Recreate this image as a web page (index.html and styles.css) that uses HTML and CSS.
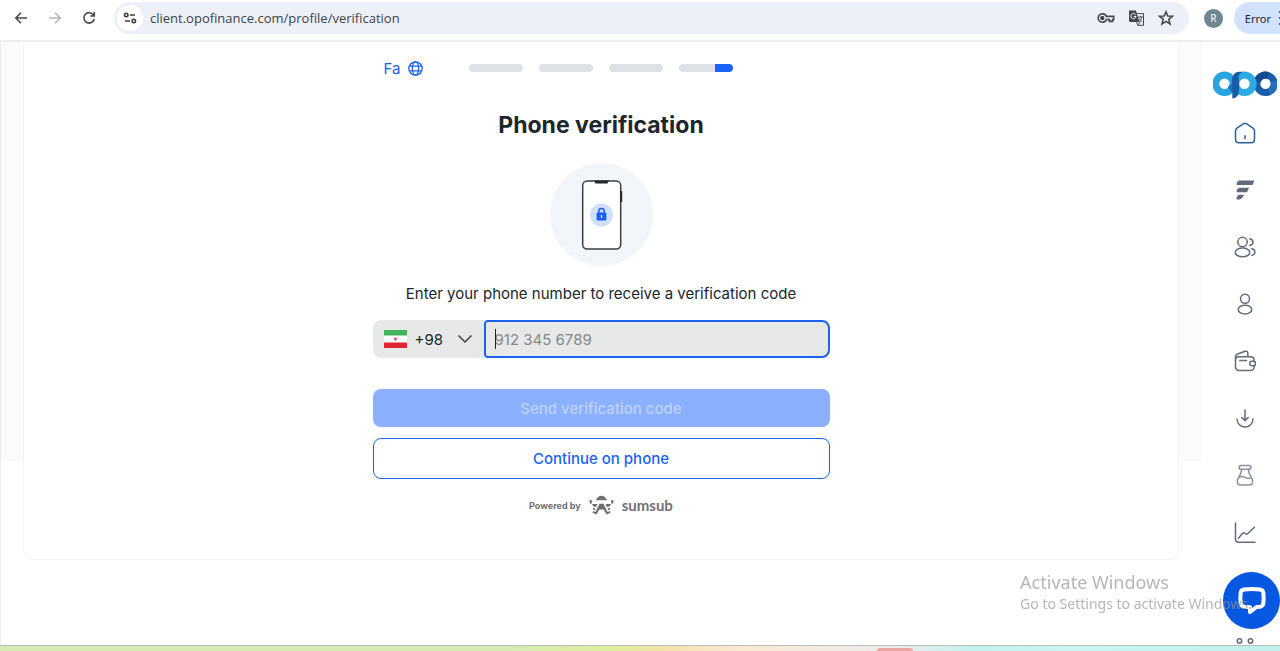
FILE: index.html
```html
<!DOCTYPE html>
<html lang="en">

<head>
    <meta charset="UTF-8">
    <meta name="viewport" content="width=device-width, initial-scale=1.0">
    <title>Phone verification</title>
    <link rel="stylesheet" href="styles.css">
</head>

<body>
    <header class="toolbar">
        <nav class="toolbar-nav">
            <button type="button" class="icon-button" aria-label="Back">
                <svg width="16" height="16" viewBox="0 0 16 16"><path d="M14 8H3M8 2.8L2.8 8L8 13.2" /></svg>
            </button>
            <button type="button" class="icon-button muted" aria-label="Forward">
                <svg width="16" height="16" viewBox="0 0 16 16"><path d="M2 8H13M8 2.8L13.2 8L8 13.2" /></svg>
            </button>
            <button type="button" class="icon-button" aria-label="Reload">
                <svg width="16" height="16" viewBox="0 0 16 16"><path d="M12.6 5.2A5.2 5.2 0 1 0 13.2 9M13.3 2V6H9.3" /></svg>
            </button>
        </nav>
        <div class="address-bar">
            <button type="button" class="site-info" aria-label="Site information">
                <svg width="14" height="14" viewBox="0 0 14 14"><circle cx="3.2" cy="4" r="1.7" /><path d="M7 4H12M2 10H7" /><circle cx="10.8" cy="10" r="1.7" /></svg>
            </button>
            <input type="text" class="address-input" value="client.opofinance.com/profile/verification" aria-label="Address">
            <div class="address-actions">
                <button type="button" class="icon-button" aria-label="Passwords">
                    <svg width="18" height="16" viewBox="0 0 18 16"><path d="M9.4 6.4H16.7V9.6H15.6V11.4H12.4V9.6H9.4A4.3 4.3 0 1 1 9.4 6.4Z" /><circle cx="5.3" cy="8" r="1.4" fill="currentColor" /></svg>
                </button>
                <button type="button" class="icon-button" aria-label="Translate">
                    <svg width="17" height="16" viewBox="0 0 17 16"><path class="solid" d="M1 0.5H8L11.5 12H2.5A1.5 1.5 0 0 1 1 10.5Z" /><path class="light" d="M7.6 4.7A2.6 2.6 0 1 0 8 6.4H5.7" /><path class="thin" d="M9.3 3.6H15.5V15.3H9.8L8.5 12.2M9.8 15L12.2 12M10.2 7H14.8M12.4 5.8V7M14 7C13.5 9.4 12 11 10.8 11.8M11.3 8.5C12 10.2 13 11.2 14.3 12" /></svg>
                </button>
                <button type="button" class="icon-button" aria-label="Bookmark">
                    <svg width="16" height="16" viewBox="0 0 16 16"><path d="M8 1.8L9.8 6L14.3 6.3L10.8 9.3L12 13.9L8 11.4L4 13.9L5.2 9.3L1.7 6.3L6.2 6Z" /></svg>
                </button>
            </div>
        </div>
        <button type="button" class="avatar">R</button>
        <button type="button" class="error-button">Error <span class="dots"></span></button>
    </header>

    <div class="page">
        <main class="content">
            <section class="card">
                <form class="verification">
                    <div class="top-row">
                        <button type="button" class="language">
                            Fa
                            <svg width="15" height="15" viewBox="0 0 15 15"><circle cx="7.5" cy="7.5" r="6.7" /><ellipse cx="7.5" cy="7.5" rx="3.1" ry="6.7" /><path d="M1.4 5.2H13.6M1.4 9.8H13.6" /></svg>
                        </button>
                        <div class="steps">
                            <span class="step"></span>
                            <span class="step"></span>
                            <span class="step"></span>
                            <span class="step current"></span>
                        </div>
                    </div>

                    <h1 class="title">Phone verification</h1>

                    <svg class="phone-picture" width="103" height="103" viewBox="0 0 103 103">
                        <circle cx="51.5" cy="51.5" r="51.5" fill="#f2f5fa" />
                        <rect x="32.7" y="18" width="38" height="68" rx="4.5" fill="#fff" stroke="#3b3d42" stroke-width="1.5" />
                        <path d="M44 17.5H59L57.5 20.5H45.5Z" fill="#25272c" />
                        <rect x="70.2" y="28" width="2" height="11" rx="0.6" fill="#25272c" />
                        <circle cx="51.5" cy="52" r="11.5" fill="#d0dffc" />
                        <path d="M48.8 50V48.3A2.7 2.7 0 0 1 54.2 48.3V50" fill="none" stroke="#1b5ff0" stroke-width="1.5" />
                        <rect x="46.6" y="49.5" width="9.8" height="8" rx="1" fill="#1b5ff0" />
                        <path d="M51.5 52V55" stroke="#cfdffc" stroke-width="1.4" />
                    </svg>

                    <label for="phone" class="hint">Enter your phone number to receive a verification code</label>

                    <div class="phone-row">
                        <div class="country">
                            <svg width="23" height="18" viewBox="0 0 23 18"><rect width="23" height="18" fill="#fff" /><rect width="23" height="5.5" fill="#41b35d" /><rect y="12.5" width="23" height="5.5" fill="#e0252f" /><path d="M9.8 7.6L11.5 10.4L13.2 7.6M11.5 7.6V10.4" fill="none" stroke="#e0454c" /></svg>
                            <select class="country-select" aria-label="Country code">
                                <option>+98</option>
                            </select>
                            <svg class="chevron" width="16" height="10" viewBox="0 0 16 10"><path d="M1.5 1.5L8 8L14.5 1.5" /></svg>
                        </div>
                        <div class="phone-field">
                            <input type="tel" id="phone" class="phone-input" placeholder="912 345 6789">
                            <span class="caret"></span>
                        </div>
                    </div>

                    <button type="submit" class="send-button" disabled>Send verification code</button>
                    <button type="button" class="continue-button">Continue on phone</button>

                    <div class="powered">
                        <span>Powered by</span>
                        <svg width="25" height="20" viewBox="0 0 25 20">
                            <path d="M6.5 5.2C8 4.6 8.6 0.8 12.5 0.8S17 4.6 18.5 5.2Z" />
                            <path d="M0.5 5L3.2 5.6L2.3 9L0.8 8.4ZM24.5 5L21.8 5.6L22.7 9L24.2 8.4Z" />
                            <path d="M3 9H8.5L7 12L4.5 11.6ZM22 9H16.5L18 12L20.5 11.6Z" />
                            <path d="M10.5 8.8H14.5L18.5 17L21 16L21.5 17.8L17.6 19.4L14.6 14.4H10.4L7.4 19.4L3.5 17.8L4 16L6.5 17Z" />
                            <path d="M4 12.8L6.6 13.6L5.6 15.2L4 14.6ZM21 12.8L18.4 13.6L19.4 15.2L21 14.6Z" />
                        </svg>
                        <span class="brand">sumsub</span>
                    </div>
                </form>
            </section>
        </main>

        <aside class="sidebar">
            <a href="#" class="logo" aria-label="Opo">
                <svg width="64" height="28" viewBox="0 0 64 28">
                    <g fill="none" stroke-width="7">
                        <circle cx="52.5" cy="12.8" r="8.7" stroke="#1c5da8" />
                        <path d="M44 10.8A8.7 8.7 0 0 1 55 4.5" stroke="#154a8e" />
                        <circle cx="11.5" cy="12.8" r="8.7" stroke="#27a5df" />
                        <circle cx="31.5" cy="12.8" r="8.7" stroke="#2aabe4" />
                        <path d="M17 19A8.7 8.7 0 0 0 20 14" stroke="#1c74bd" />
                        <path d="M56 20.8A8.7 8.7 0 0 0 61 10" stroke="#2170b8" />
                    </g>
                    <path d="M22 2C19 5 18.5 9 19.3 14V27.5C23.5 27 26 24 26 20V11C26 7 24 3 30 0.8C26 0.5 24 0.8 22 2Z" fill="#1a5ba6" />
                </svg>
            </a>
            <nav class="menu">
                <a href="#" class="home" aria-label="Home"><svg width="22" height="22" viewBox="0 0 22 22"><path d="M1.5 9C1.5 7.7 2 6.9 3 6.2L9.2 1.8C10.4 1 11.6 1 12.8 1.8L19 6.2C20 6.9 20.5 7.7 20.5 9V17C20.5 19.5 19 20.8 17 20.8H5C3 20.8 1.5 19.5 1.5 17ZM11 13.8V16.8" /></svg></a>
                <a href="#" aria-label="Platforms"><svg width="22" height="22" viewBox="0 0 22 22"><path class="fill" d="M5 1.5H20.5L18.5 6H2.5C2.7 3.5 3.4 2.2 5 1.5ZM5 8.7H15L13 13.2H2.5C2.7 10.7 3.4 9.4 5 8.7ZM5 15.7H10L8.5 18.5C7.5 20 5.5 20.8 2.5 20.5C2.4 18 3.4 16.4 5 15.7Z" /></svg></a>
                <a href="#" aria-label="Partners"><svg width="22" height="22" viewBox="0 0 22 22"><circle cx="8.5" cy="6" r="4.7" /><ellipse cx="8.5" cy="16.4" rx="7.3" ry="4.4" /><path d="M15.8 2.8C17.8 3.2 19 4.4 19 6.1S17.8 9 15.8 9.4M17.8 12.8C19.8 13.3 20.9 14.5 20.9 16S19.8 18.8 17.8 19.4" /></svg></a>
                <a href="#" aria-label="Profile"><svg width="22" height="22" viewBox="0 0 22 22"><circle cx="11" cy="5.8" r="4.5" /><ellipse cx="11" cy="16.6" rx="6.8" ry="4.4" /></svg></a>
                <a href="#" aria-label="Wallet"><svg width="22" height="22" viewBox="0 0 22 22"><path d="M20 11V10A3.3 3.3 0 0 0 16.7 6.7H4.8A3.3 3.3 0 0 0 1.5 10V17A3.5 3.5 0 0 0 5 20.5H16.5A3.5 3.5 0 0 0 20 17V16M1.5 10V6.8C1.5 5.5 2 4.8 3.2 4.3L11 1.3C12.5 0.8 13.8 1.5 13.8 3V6.7M5.8 10.5H12.5M20.5 11.2H18A2.3 2.3 0 0 0 18 15.8H20.5C21 15.8 21.2 15.5 21.2 15V12C21.2 11.5 21 11.2 20.5 11.2Z" /></svg></a>
                <a href="#" aria-label="Deposit"><svg width="22" height="22" viewBox="0 0 22 22"><path d="M11 3V13.5M7.8 10.5L11 13.7L14.2 10.5M3 12A8 8 0 0 0 19 12" /></svg></a>
                <a href="#" class="lab" aria-label="Demo"><svg width="22" height="22" viewBox="0 0 22 22"><path d="M7 1.5H15A1.9 1.9 0 0 1 15 5.3H7A1.9 1.9 0 0 1 7 1.5ZM7.5 5.3C7.8 8.5 6.4 10.5 4.4 13.8C2.4 17 3 21 6.5 21H15.5C19 21 19.6 17 17.6 13.8C15.6 10.5 14.2 8.5 14.5 5.3M4.5 13.6C7 12 9 12.4 11 13.4S15.5 14.5 17.5 13.6" /></svg></a>
                <a href="#" aria-label="Analysis"><svg width="22" height="22" viewBox="0 0 22 22"><path d="M1.5 2V18.5A3 3 0 0 0 4.5 21.3H21M4.5 17.3L8.5 12.3C9.3 11.4 10 11.4 11 12.3C12.2 13.4 13 13.4 14 12.3L20.5 6.3" /></svg></a>
                <a href="#" class="more" aria-label="More"><svg width="22" height="22" viewBox="0 0 22 22"><circle cx="5.5" cy="6" r="2.2" /><circle cx="16.5" cy="6" r="2.2" /><circle cx="5.5" cy="17" r="2.2" /><circle cx="16.5" cy="17" r="2.2" /></svg></a>
            </nav>
        </aside>
    </div>

    <footer class="taskbar"><span class="taskbar-tab"></span></footer>

    <button type="button" class="chat-button" aria-label="Chat">
        <svg width="30" height="30" viewBox="0 0 30 30"><path d="M7 3.5C12 2.8 18 2.8 23 3.5C25 3.8 26 4.8 26.3 6.5C26.8 10 26.8 14 26.3 17.5C26 19.4 25 20.4 23 20.7L19.5 21L13 26V21.2L7 20.7C5 20.4 4 19.4 3.7 17.5C3.2 14 3.2 10 3.7 6.5C4 4.8 5 3.8 7 3.5Z" /></svg>
    </button>
    <div class="watermark">
        <p class="watermark-title">Activate Windows</p>
        <p>Go to Settings to activate Windows.</p>
    </div>
</body>

</html>
```
FILE: styles.css
```css
:root {
    --primary-color: #1b63f5;
    --text-color: #20252c;
    --icon-color: #626b7b;
    --field-color: #e7e9e9;
    --system-font: "Noto Sans", "Open Sans", sans-serif;
}

* {
    margin: 0;
    padding: 0;
    box-sizing: border-box;
}

body {
    font-family: Inter, sans-serif;
    font-size: 15px;
    color: var(--text-color);
    background-color: #fff;
    display: flex;
    flex-direction: column;
    height: 100vh;
    overflow: hidden;
}

button,
input,
select {
    font: inherit;
    color: inherit;
    background: none;
    border: none;
    outline: none;
}

svg {
    display: block;
    flex-shrink: 0;
}

/* Browser toolbar */
.toolbar {
    display: flex;
    align-items: center;
    height: 42px;
    padding: 0 0 4px 13px;
    border-bottom: 2px solid #eeeeef;
    font-family: var(--system-font);
    flex-shrink: 0;
}

.toolbar-nav {
    display: flex;
    gap: 18px;
    margin-right: 17px;
}

.icon-button svg {
    fill: none;
    stroke: currentColor;
    stroke-width: 1.6;
}

.icon-button {
    color: #45484c;
}

.icon-button.muted {
    color: #b4b6b9;
}

.icon-button .solid {
    fill: currentColor;
    stroke: none;
}

.icon-button .light {
    stroke: #fff;
    stroke-width: 1;
}

.icon-button .thin {
    stroke-width: 1;
}

.address-bar {
    display: flex;
    align-items: center;
    flex: 1;
    height: 32px;
    padding: 0 15px 0 3px;
    border-radius: 16px;
    background-color: #edf0f9;
}

.site-info {
    display: flex;
    align-items: center;
    justify-content: center;
    width: 26px;
    height: 26px;
    border-radius: 50%;
    background-color: #fff;
}

.site-info svg {
    fill: none;
    stroke: #3c4043;
    stroke-width: 1.6;
}

.toolbar-nav .icon-button {
    width: 16px;
}

.address-input {
    flex: 1;
    min-width: 0;
    margin-left: 7px;
    font-family: "Open Sans", sans-serif;
    font-size: 13px;
    color: #3f4247;
}

.address-actions {
    display: flex;
    gap: 13px;
}

.avatar {
    width: 19px;
    height: 19px;
    margin: 0 11px 0 15px;
    border-radius: 50%;
    background-color: #6d8791;
    color: #fff;
    font-size: 10px;
}

.error-button {
    display: flex;
    align-items: center;
    gap: 8px;
    height: 32px;
    padding-left: 11px;
    border-radius: 16px 0 0 16px;
    background-color: #d3e2fc;
    font-size: 11px;
}

.dots {
    width: 1px;
    height: 15px;
    background: repeating-linear-gradient(#55637c 0 2px, transparent 2px 6px);
}

/* Page */
.page {
    display: flex;
    flex: 1;
    min-height: 0;
    border-left: 1px solid #ececec;
}

.content {
    flex: 1;
    padding: 0 23px 0 22px;
    background: linear-gradient(#fbfbfb, #fbfbfb) no-repeat 0 0 / 100% 419px;
}

.card {
    height: 518px;
    padding-top: 16px;
    border: 1px solid #f4f4f4;
    border-top: none;
    border-radius: 0 0 10px 10px;
    background-color: #fff;
}

.verification {
    display: flex;
    flex-direction: column;
    max-width: 457px;
    margin: 0 auto;
}

.top-row {
    display: flex;
    align-items: center;
    gap: 46px;
    height: 20px;
    padding-left: 11px;
}

.language {
    display: flex;
    align-items: center;
    gap: 8px;
    color: var(--primary-color);
}

.language svg {
    fill: none;
    stroke: currentColor;
    stroke-width: 1.3;
}

.steps {
    display: flex;
    gap: 16px;
}

.step {
    width: 54px;
    height: 8px;
    border-radius: 4px;
    background-color: #dee1e5;
}

.step.current {
    background: linear-gradient(to right, #dee1e5 66%, var(--primary-color) 66%);
}

.title {
    margin-top: 32px;
    font-size: 23px;
    font-weight: 700;
    line-height: 30px;
    text-align: center;
}

.phone-picture {
    align-self: center;
    margin-top: 23px;
}

.hint {
    margin-top: 16px;
    line-height: 24px;
    text-align: center;
}

.phone-row {
    display: flex;
    height: 38px;
    margin-top: 14px;
}

.country {
    display: flex;
    align-items: center;
    width: 111px;
    padding: 0 11px;
    border-radius: 8px 0 0 8px;
    background-color: var(--field-color);
}

.country-select {
    flex: 1;
    min-width: 0;
    padding-left: 8px;
    appearance: none;
}

.chevron {
    fill: none;
    stroke: #3c4148;
    stroke-width: 1.5;
}

.phone-field {
    position: relative;
    flex: 1;
}

.phone-input {
    width: 100%;
    height: 38px;
    padding: 0 9px;
    border: 2px solid var(--primary-color);
    border-radius: 4px 8px 8px 4px;
    background-color: var(--field-color);
}

.phone-input::placeholder {
    color: #858788;
}

.caret {
    position: absolute;
    top: 9px;
    left: 11px;
    width: 1px;
    height: 20px;
    background-color: #222;
}

.phone-input:focus + .caret {
    display: none;
}

.send-button,
.continue-button {
    border-radius: 8px;
    font-weight: 500;
}

.send-button {
    height: 38px;
    margin-top: 31px;
    background-color: #8bb0fe;
    color: #bed3fe;
}

.continue-button {
    height: 41px;
    margin-top: 11px;
    border: 1px solid var(--primary-color);
    color: var(--primary-color);
}

.powered {
    display: flex;
    align-items: center;
    justify-content: center;
    gap: 8px;
    margin-top: 16px;
    font-size: 9px;
    font-weight: 700;
    color: #707173;
}

.powered svg {
    fill: #6d6e70;
}

.brand {
    font-family: Lato, sans-serif;
    font-size: 15px;
    font-weight: 700;
    line-height: 20px;
}

/* Sidebar */
.sidebar {
    width: 78px;
    padding: 29px 3px 0 11px;
    background-color: #fff;
}

.menu {
    display: flex;
    flex-direction: column;
    align-items: center;
    gap: 35px;
    margin-top: 23px;
}

.menu svg {
    fill: none;
    stroke: var(--icon-color);
    stroke-width: 1.5;
    stroke-linecap: round;
    stroke-linejoin: round;
}

.menu .fill {
    fill: var(--icon-color);
    stroke: none;
}

.menu .home svg {
    stroke: #2b609e;
}

.menu .lab svg {
    stroke: #8a909c;
}

.menu .more {
    margin-top: 57px;
}

/* Desktop overlays */
.taskbar {
    display: flex;
    justify-content: flex-end;
    height: 6px;
    padding: 2px 367px 0 0;
    border-top: 1px solid #b9bdb8;
    background: linear-gradient(to right, #d5ebb2 0%, #d5ebb2 40%, #dfee9c 48%, #f3e2a8 52%, #f8e8d0 57%, #f2eae2 65%, #ececec 70%, #c3f1ee 76%, #c9f6f3 84%, #bff0ec 100%);
    flex-shrink: 0;
}

.taskbar-tab {
    width: 36px;
    border-radius: 3px 3px 0 0;
    background-color: #e8a5a3;
}

.chat-button {
    position: fixed;
    right: 0;
    bottom: 22px;
    display: flex;
    align-items: center;
    justify-content: center;
    width: 57px;
    height: 57px;
    border-radius: 50%;
    background-color: #0658e0;
}

.chat-button svg {
    fill: none;
    stroke: #fff;
    stroke-width: 4;
    stroke-linejoin: round;
}

.watermark {
    position: fixed;
    right: 28px;
    bottom: 38px;
    font-family: var(--system-font);
    font-size: 14px;
    line-height: 18px;
    color: rgba(150, 150, 150, 0.7);
    pointer-events: none;
}

.watermark-title {
    font-size: 18px;
    line-height: 25px;
}
```
